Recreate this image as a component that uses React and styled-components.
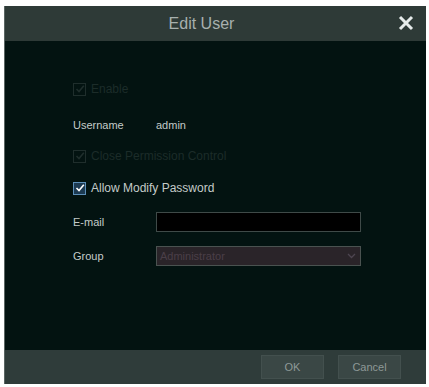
import React from "react";
import styled, { createGlobalStyle } from "styled-components";

const Global = createGlobalStyle`
  html, body { margin: 0; padding: 0; background: #ffffff; }
  body { font-family: "Liberation Sans", Arial, sans-serif; }
`;

const Page = styled.div`
  width: 429px;
  height: 387px;
  padding: 6px 3px 3px 4px;
  box-sizing: border-box;
  display: flex;
`;

const Dialog = styled.div`
  flex: 1;
  display: flex;
  flex-direction: column;
  background: #031311;
  border-left: 1px solid #5a6563;
`;

const TitleBar = styled.div`
  height: 35px;
  flex: none;
  background: #2e3a37;
  display: flex;
  align-items: center;
  justify-content: center;
  position: relative;
`;

const Title = styled.div`
  color: #a7b0ae;
  font-size: 16px;
  margin-left: -28px;
`;

const Close = styled.div`
  position: absolute;
  right: 11px;
  top: 8px;
  width: 18px;
  height: 18px;
`;

const Body = styled.div`
  flex: 1;
  display: flex;
  flex-direction: column;
  padding: 41px 0 0 68px;
`;

const Row = styled.div`
  display: flex;
  align-items: center;
  height: ${(p) => p.$h}px;
  margin-top: ${(p) => p.$mt || 0}px;
`;

const Box = styled.div`
  width: 11px;
  height: 11px;
  border: 1px solid ${(p) => (p.$on ? "#5d8fb8" : "#1f2e2c")};
  background: ${(p) => (p.$on ? "#1c3a52" : "transparent")};
  margin-right: 5px;
  display: flex;
  align-items: center;
  justify-content: center;
`;

const Text = styled.span`
  font-size: ${(p) => p.$size || 11}px;
  color: ${(p) => (p.$dim ? "#1c2c29" : "#c3cbc9")};
`;

const Label = styled.span`
  width: 83px;
  font-size: 11px;
  color: #c3cbc9;
`;

const Input = styled.div`
  width: 203px;
  height: 18px;
  background: #000;
  border: 1px solid #3f4a48;
`;

const Select = styled.div`
  width: 196px;
  height: 18px;
  background: #2a2429;
  border: 1px solid #4a5250;
  display: flex;
  align-items: center;
  justify-content: space-between;
  padding: 0 4px 0 3px;
`;

const SelectText = styled.span`
  font-size: 11px;
  color: #4a3f48;
`;

const Footer = styled.div`
  height: 34px;
  flex: none;
  background: #2f3c3a;
  display: flex;
  align-items: center;
  justify-content: flex-end;
  gap: 14px;
  padding-right: 25px;
`;

const Button = styled.div`
  width: 63px;
  height: 24px;
  background: #3a4745;
  border: 1px solid #43504e;
  box-sizing: border-box;
  display: flex;
  align-items: center;
  justify-content: center;
  font-size: 11px;
  color: #8e9997;
`;

const Check = ({ color }) => (
  <svg width="10" height="10" viewBox="0 0 10 10">
    <path d="M1.5 5 L4 7.5 L8.8 1.8" stroke={color} strokeWidth="1.6" fill="none" />
  </svg>
);

export default function App() {
  return (
    <>
      <Global />
      <Page>
        <Dialog>
          <TitleBar>
            <Title>Edit User</Title>
            <Close>
              <svg width="18" height="18" viewBox="0 0 18 18">
                <path d="M3 3 L15 15 M15 3 L3 15" stroke="#e6ebea" strokeWidth="3" />
              </svg>
            </Close>
          </TitleBar>
          <Body>
            <Row $h={14}>
              <Box><Check color="#1f2e2c" /></Box>
              <Text $dim $size={12}>Enable</Text>
            </Row>
            <Row $h={20} $mt={19}>
              <Label>Username</Label>
              <Text>admin</Text>
            </Row>
            <Row $h={14} $mt={14}>
              <Box><Check color="#1f2e2c" /></Box>
              <Text $dim $size={12}>Close Permission Control</Text>
            </Row>
            <Row $h={14} $mt={18}>
              <Box $on><Check color="#ffffff" /></Box>
              <Text $size={12}>Allow Modify Password</Text>
            </Row>
            <Row $h={20} $mt={17}>
              <Label>E-mail</Label>
              <Input />
            </Row>
            <Row $h={20} $mt={14}>
              <Label>Group</Label>
              <Select>
                <SelectText>Administrator</SelectText>
                <svg width="9" height="6" viewBox="0 0 9 6">
                  <path d="M1 1 L4.5 4.5 L8 1" stroke="#4d4550" strokeWidth="1.3" fill="none" />
                </svg>
              </Select>
            </Row>
          </Body>
          <Footer>
            <Button>OK</Button>
            <Button>Cancel</Button>
          </Footer>
        </Dialog>
      </Page>
    </>
  );
}
